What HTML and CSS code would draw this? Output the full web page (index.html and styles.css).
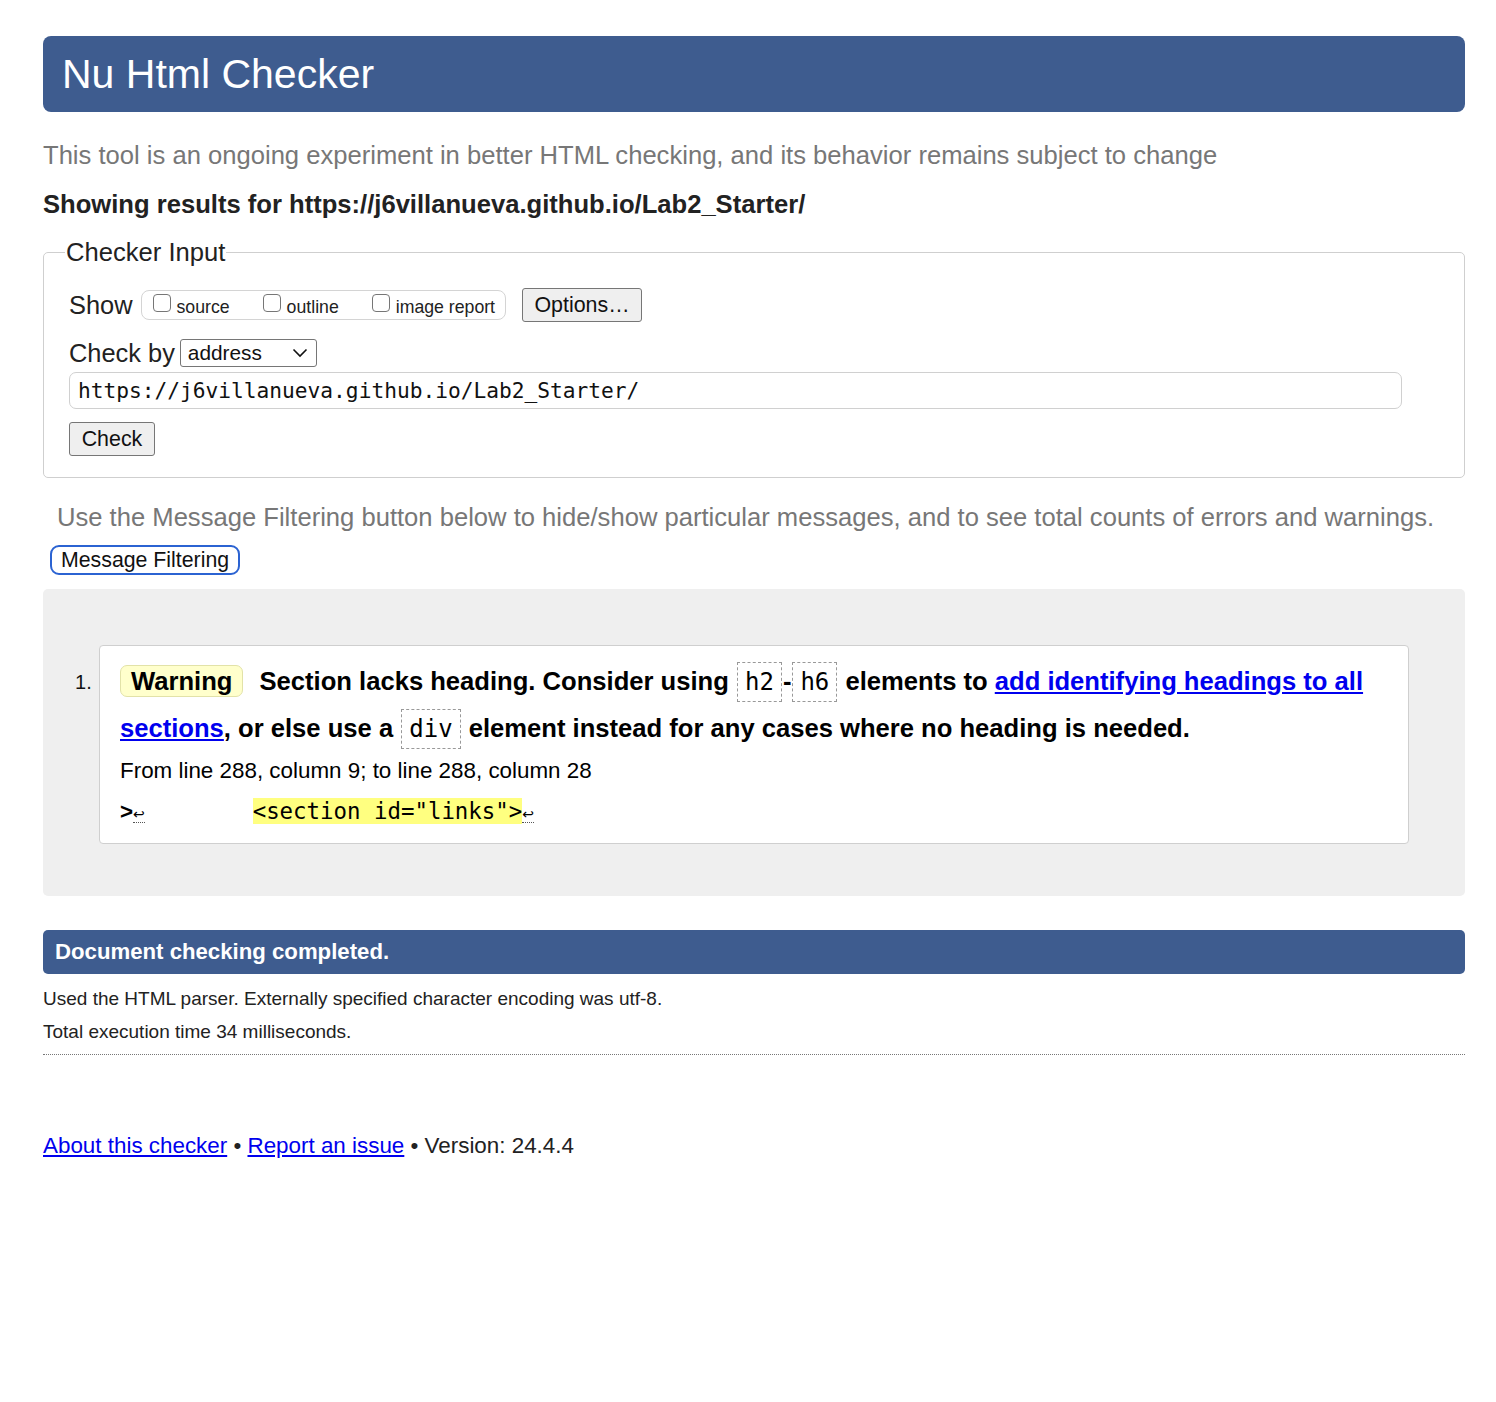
FILE: index.html
```html
<!DOCTYPE html>
<html lang="en">
<head>
<meta charset="utf-8">
<title>Showing results for https://j6villanueva.github.io/Lab2_Starter/ - Nu Html Checker</title>
<link rel="stylesheet" href="styles.css">
</head>
<body>
<div class="page">
  <h1 class="banner">Nu Html Checker</h1>
  <p class="tagline">This tool is an ongoing experiment in better HTML checking, and its behavior remains subject to change</p>
  <p class="showing">Showing results for https://j6villanueva.github.io/Lab2_Starter/</p>

  <fieldset class="input-box">
    <legend>Checker Input</legend>
    <div class="row show-row">
      <span class="row-label">Show</span>
      <span class="check-group">
        <label class="chk"><span class="box"></span>source</label>
        <label class="chk"><span class="box"></span>outline</label>
        <label class="chk"><span class="box"></span>image report</label>
      </span>
      <span class="btn options">Options…</span>
    </div>
    <div class="row by-row">
      <span class="row-label">Check by</span>
      <span class="select">address
        <svg class="chev" width="16" height="10" viewBox="0 0 16 10"><path d="M1.5 1.5 L8 8 L14.5 1.5" fill="none" stroke="#111" stroke-width="1.6"/></svg>
      </span>
    </div>
    <div class="url">https://j6villanueva.github.io/Lab2_Starter/</div>
    <span class="btn check">Check</span>
  </fieldset>

  <p class="filter-note">Use the Message Filtering button below to hide/show particular messages, and to see total counts of errors and warnings.</p>
  <span class="filter-btn">Message Filtering</span>

  <div class="results">
    <ol class="messages">
      <li class="msg">
        <p class="msg-text"><span class="badge">Warning</span> Section lacks heading. Consider using <code>h2</code>-<code>h6</code> elements to <a href="#">add identifying headings to all sections</a>, or else use a <code>div</code> element instead for any cases where no heading is needed.</p>
        <p class="location">From line 288, column 9; to line 288, column 28</p>
        <p class="extract"><span class="ret">&gt;<span class="lf">↩</span></span>        <mark>&lt;section id="links"&gt;</mark><span class="lf">↩</span></p>
      </li>
    </ol>
  </div>

  <p class="done">Document checking completed.</p>
  <div class="details">
    <p>Used the HTML parser. Externally specified character encoding was utf-8.</p>
    <p>Total execution time 34 milliseconds.</p>
  </div>

  <p class="footer"><a href="#">About this checker</a> • <a href="#">Report an issue</a> • Version: 24.4.4</p>
</div>
</body>
</html>
```

FILE: styles.css
```css
html, body {
  margin: 0;
  padding: 0;
  background: #fff;
}
body {
  font-family: "Liberation Sans", Arial, Helvetica, sans-serif;
  color: #222;
}
.page {
  padding: 36px 31px 200px 43px;
}
.banner {
  margin: 0;
  height: 76px;
  box-sizing: border-box;
  padding: 0 19px;
  background: #3e5c8f;
  color: #fff;
  border-radius: 8px;
  font-weight: normal;
  font-size: 41px;
  line-height: 76px;
}
.tagline {
  margin: 27px 0 0;
  color: #777;
  font-size: 25.6px;
  line-height: 32px;
}
.showing {
  margin: 17px 0 0;
  font-size: 25.6px;
  font-weight: bold;
  line-height: 32px;
  color: #222;
}
.input-box {
  margin: 18px 0 0;
  border: 1px solid #cfcfcf;
  border-radius: 5px;
  padding: 22px 25px 21px 25px;
  min-inline-size: 0;
}
.input-box legend {
  font-size: 25.6px;
  padding: 0 1px;
  margin-left: -4px;
  color: #222;
}
.row {
  display: flex;
  align-items: center;
}
.row-label {
  font-size: 25.4px;
  color: #222;
}
.show-row {
  height: 34px;
  margin-top: -1px;
}
.check-group {
  display: flex;
  align-items: center;
  gap: 33px;
  margin-left: 8px;
  height: 30px;
  box-sizing: border-box;
  padding: 0 10px 0 11px;
  border: 1px solid #d4d4d4;
  border-radius: 8px;
}
.chk {
  display: flex;
  align-items: center;
  font-size: 17.7px;
  color: #222;
  position: relative;
  top: 2px;
}
.box {
  display: inline-block;
  width: 18px;
  height: 18px;
  box-sizing: border-box;
  border: 1px solid #767676;
  border-radius: 4px;
  margin-right: 6px;
  position: relative;
  top: -4px;
}
.btn {
  display: inline-block;
  box-sizing: border-box;
  font-size: 21.4px;
  color: #111;
  background: #efefef;
  border: 1px solid #767676;
  border-radius: 3px;
  text-align: center;
}
.options {
  margin-left: 16px;
  width: 120px;
  height: 34px;
  line-height: 32px;
}
.by-row {
  margin-top: 17px;
  height: 28px;
}
.select {
  margin-left: 5px;
  width: 137px;
  height: 28px;
  box-sizing: border-box;
  border: 1px solid #767676;
  border-radius: 3px;
  font-size: 20.8px;
  padding: 0 0 0 7px;
  display: flex;
  align-items: center;
  justify-content: space-between;
  color: #111;
}
.chev {
  margin-right: 8px;
}
.url {
  margin-top: 5px;
  height: 37px;
  box-sizing: border-box;
  border: 1px solid #d0d0d0;
  border-radius: 7px;
  padding: 0 8px;
  width: 1333px;
  font-family: "DejaVu Sans Mono", monospace;
  font-size: 21.2px;
  line-height: 35px;
  color: #111;
}
.check {
  margin-top: 13px;
  width: 86px;
  height: 34px;
  line-height: 32px;
}
.filter-note {
  margin: 23px 0 0 14px;
  font-size: 25.6px;
  color: #777;
  line-height: 32px;
}
.filter-btn {
  display: inline-block;
  margin: 12px 0 0 7px;
  height: 30px;
  box-sizing: border-box;
  padding: 0 9px;
  border: 2px solid #2b63d2;
  border-radius: 9px;
  font-size: 21.3px;
  line-height: 26px;
  color: #111;
}
.results {
  margin-top: 14px;
  background: #efefef;
  border-radius: 5px;
  padding: 56px 56px 52px 56px;
}
.messages {
  margin: 0;
  padding: 0;
  list-style: none;
  counter-reset: msg;
}
.msg {
  position: relative;
  background: #fff;
  border: 1px solid #cfcfcf;
  border-radius: 4px;
  padding: 12px 20px 15px 20px;
  counter-increment: msg;
}
.msg::before {
  content: counter(msg) ".";
  position: absolute;
  left: -25px;
  top: 25px;
  font-size: 20px;
  color: #111;
}
.msg-text {
  margin: 0;
  font-size: 25.6px;
  font-weight: bold;
  line-height: 46px;
  color: #000;
}
.badge {
  display: inline-block;
  background: #ffffcc;
  border: 1px solid #e2e2a8;
  border-radius: 7px;
  padding: 0 10px;
  line-height: 30px;
  margin-right: 9px;
}
.msg-text code {
  font-family: "DejaVu Sans Mono", monospace;
  font-weight: normal;
  font-size: 24px;
  border: 1px dashed #999;
  padding: 5px 7px;
  margin: 0 1px;
}
.msg-text a {
  color: #0000ee;
}
.location {
  margin: 5px 0 0;
  font-size: 22.4px;
  line-height: 28px;
  color: #000;
}
.extract {
  margin: 12px 0 0;
  font-family: "DejaVu Sans Mono", monospace;
  font-size: 22.4px;
  line-height: 28px;
  white-space: pre;
  color: #000;
}
.extract .ret {
  font-family: "Liberation Sans", Arial, sans-serif;
  font-weight: bold;
}
.lf {
  font-family: "DejaVu Sans", sans-serif;
  font-weight: normal;
  font-size: 14px;
  border-bottom: 1px dotted #555;
}
.extract mark {
  background: #ffff80;
  color: #000;
}
.done {
  margin: 34px 0 0;
  height: 44px;
  background: #3e5c8f;
  color: #fff;
  border-radius: 5px;
  padding: 0 12px;
  font-size: 22.2px;
  font-weight: bold;
  line-height: 44px;
}
.details {
  margin-top: 8px;
  border-bottom: 1px dotted #777;
  padding-bottom: 6px;
}
.details p {
  margin: 0;
  font-size: 19px;
  line-height: 33px;
  color: #222;
}
.footer {
  margin: 78px 0 0;
  font-size: 22.4px;
  color: #222;
}
.footer a {
  color: #0000ee;
}
```
